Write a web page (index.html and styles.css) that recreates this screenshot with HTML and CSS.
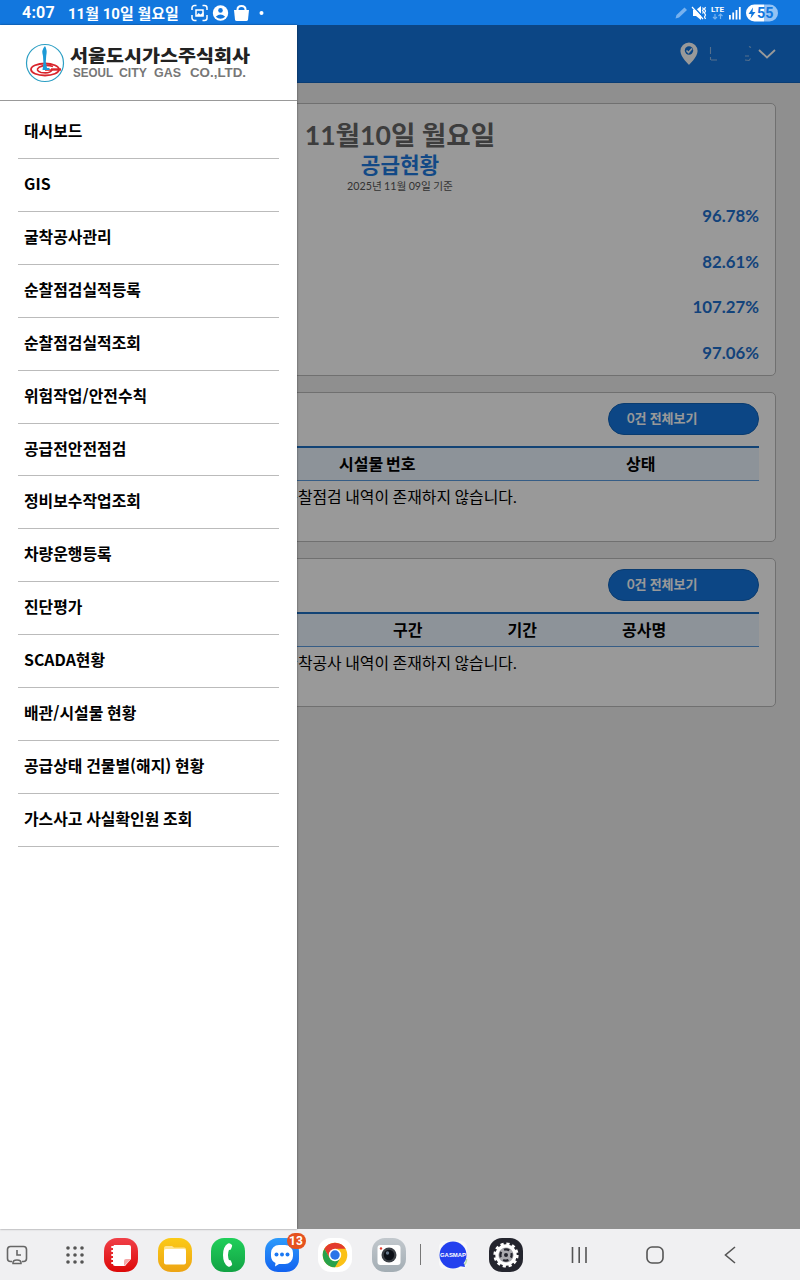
FILE: index.html
```html
<!DOCTYPE html>
<html lang="ko">
<head>
    <meta charset="UTF-8">
    <meta name="viewport" content="width=device-width, initial-scale=1.0">
    <title>서울도시가스</title>
    <link rel="stylesheet" href="styles.css">
</head>
<body>
    <div class="status-bar">
        <span class="clock">4:07</span>
        <span class="date">11월 10일 월요일</span>
        <svg class="status-left" width="76" height="18" viewBox="0 0 76 18">
            <g fill="none" stroke="#fff" stroke-width="1.500">
                <path d="M1 6V4a2.500 2.500 0 0 1 2.500-2.500H5.500M11.500 1.500h2A2.500 2.500 0 0 1 16 4v2M16 11v3a2.500 2.500 0 0 1-2.500 2.500h-2M5.500 16.500h-2A2.500 2.500 0 0 1 1 14v-3"/>
                <path d="M5 12V6h7v6z"/>
            </g>
            <path d="M5 12l2.500-3 2 1.500 3-2.500v4z" fill="#fff"/>
            <circle cx="29.500" cy="9" r="7.700" fill="#fff"/>
            <circle cx="29.500" cy="6.400" r="2.300" fill="#1277de"/>
            <path d="M24.800 12.800q4.700-4.600 9.400 0q-4.700 4-9.400 0z" fill="#1277de"/>
            <path d="M43 6h15l-1 9.500q-.2 1.500-1.700 1.500h-9.600q-1.500 0-1.700-1.500z" fill="#fff"/>
            <path d="M46.500 7V5.500q0-3.500 4-3.500t4 3.500V7" fill="none" stroke="#fff" stroke-width="2"/>
            <circle cx="70.500" cy="9" r="2" fill="#fff"/>
        </svg>
        <svg class="status-right" width="106" height="20" viewBox="0 0 106 20">
            <path d="M3.500 15.500l1-3.500 8-7.500 2.500 2.500-8 7.500z" fill="#77b2ef"/>
            <g fill="#fff">
                <path d="M21 7h3l5-4v14l-5-4h-3z"/>
                <rect x="57" y="12" width="1.800" height="4.500"/>
                <rect x="60.300" y="9.500" width="1.800" height="7"/>
                <rect x="63.600" y="7" width="1.800" height="9.500"/>
                <rect x="66.900" y="4" width="1.800" height="12.500"/>
            </g>
            <path d="M20.500 2.500l11 12" stroke="#1277de" stroke-width="1.500"/>
            <path d="M20 4l11 12M30.500 4.500l1 1.500-1 1.500 1 1.500-1 1.500M33.500 4l-1 2 1 2-1 2 1 2-1 2 1 2" fill="none" stroke="#fff" stroke-width="1.200"/>
            <text x="39" y="9" class="lte" textLength="13" lengthAdjust="spacingAndGlyphs">LTE</text>
            <path d="M43 11v5m-2-2l2 2 2-2M48.500 16v-5m-2 2l2-2 2 2" fill="none" stroke="#77b2ef" stroke-width="1.200"/>
            <path d="M82.500 1.500H92v17h-9.500a8.500 8.500 0 0 1 0-17z" fill="#fff"/>
            <path d="M92 1.500h5.500a8.500 8.500 0 0 1 0 17H92z" fill="#94c2f4"/>
            <path d="M81 4.500L76.500 11h3l-1 4.500L83.500 9h-3z" fill="#1277de"/>
            <text x="85" y="15" class="battery" textLength="16.500" lengthAdjust="spacingAndGlyphs">55</text>
        </svg>
    </div>

    <div class="app">
        <div class="header">
            <svg width="98" height="26" viewBox="0 0 98 26">
                <path d="M9 1.500a8.600 8.600 0 0 0-8.600 8.600C.4 16 9 24 9 24s8.600-8 8.600-13.900A8.600 8.600 0 0 0 9 1.500z" fill="#fff"/>
                <circle cx="9" cy="9.500" r="4.200" fill="#1476de"/>
                <path d="M6.500 9.500l2 2 3.500-4" fill="none" stroke="#fff" stroke-width="1.600"/>
                <path d="M30.500 6v7M31 19h6M30.500 16v3M69 5.500l2 1M69 15h-4M65 19l4 .5 1.500-2" fill="none" stroke="#8fbaea" stroke-width="1.100"/>
                <path d="M79 9l8 7.500L95 9" fill="none" stroke="#fff" stroke-width="1.800"/>
            </svg>
        </div>

        <div class="content">
            <div class="card supply">
                <h1>11월10일 월요일</h1>
                <h2>공급현황</h2>
                <p class="base-date">2025년 11월 09일 기준</p>
                <ul class="rates">
                    <li>96.78%</li>
                    <li>82.61%</li>
                    <li>107.27%</li>
                    <li>97.06%</li>
                </ul>
            </div>

            <div class="card list">
                <button class="more">0건 전체보기</button>
                <div class="thead patrol">
                    <span>시설물 번호</span>
                    <span>상태</span>
                </div>
                <p class="empty">순찰점검 내역이 존재하지 않습니다.</p>
            </div>

            <div class="card list">
                <button class="more">0건 전체보기</button>
                <div class="thead digging">
                    <span>구간</span>
                    <span>기간</span>
                    <span>공사명</span>
                </div>
                <p class="empty">굴착공사 내역이 존재하지 않습니다.</p>
            </div>
        </div>

        <div class="dim"></div>

        <div class="drawer">
            <div class="logo">
                <svg width="230" height="44" viewBox="0 0 230 44">
                    <circle cx="20" cy="22" r="18.500" fill="#fff" stroke="#2d9fc4" stroke-width="1.200"/>
                    <ellipse cx="20" cy="28.500" rx="14" ry="6" fill="none" stroke="#d9252c" stroke-width="1.800"/>
                    <path d="M28 25.500q-8-2.500-14 .8-4 3 2 5.200 9 1.500 11-2.500h-7" fill="none" stroke="#d9252c" stroke-width="1.600"/>
                    <path d="M26 28.500h10" stroke="#d9252c" stroke-width="2.400"/>
                    <path d="M20 5q-4 4-2 10 1 6-.5 14h7v-2h-2.500q-2-6-.8-12Q22.500 9 20 5z" fill="#1d9ad6"/>
                    <text x="45" y="21" class="logo-ko" textLength="180" lengthAdjust="spacingAndGlyphs">서울도시가스주식회사</text>
                    <text x="48" y="36" class="logo-en" textLength="40" lengthAdjust="spacingAndGlyphs">SEOUL</text>
                    <text x="94" y="36" class="logo-en" textLength="28" lengthAdjust="spacingAndGlyphs">CITY</text>
                    <text x="129" y="36" class="logo-en" textLength="27" lengthAdjust="spacingAndGlyphs">GAS</text>
                    <text x="165" y="36" class="logo-en" textLength="56" lengthAdjust="spacingAndGlyphs">CO.,LTD.</text>
                </svg>
            </div>
            <ul class="menu">
                <li>대시보드</li>
                <li>GIS</li>
                <li>굴착공사관리</li>
                <li>순찰점검실적등록</li>
                <li>순찰점검실적조회</li>
                <li>위험작업/안전수칙</li>
                <li>공급전안전점검</li>
                <li>정비보수작업조회</li>
                <li>차량운행등록</li>
                <li>진단평가</li>
                <li>SCADA현황</li>
                <li>배관/시설물 현황</li>
                <li>공급상태 건물별(해지) 현황</li>
                <li>가스사고 사실확인원 조회</li>
            </ul>
        </div>
    </div>

    <div class="dock">
        <svg width="24" height="24" viewBox="0 0 24 24" fill="none" stroke="#666" stroke-width="1.600">
            <path d="M7 18.500H5.500a3 3 0 0 1-3-3v-9a3 3 0 0 1 3-3h13a3 3 0 0 1 3 3v9a3 3 0 0 1-3 3H17"/>
            <path d="M12 7v5h4M8 20.500q-.5-3.500 4-3.500t4 3.500z"/>
        </svg>
        <i></i>
        <svg width="20" height="20" viewBox="0 0 20 20" fill="#555">
            <circle cx="3" cy="3" r="1.800"/><circle cx="10" cy="3" r="1.800"/><circle cx="17" cy="3" r="1.800"/>
            <circle cx="3" cy="10" r="1.800"/><circle cx="10" cy="10" r="1.800"/><circle cx="17" cy="10" r="1.800"/>
            <circle cx="3" cy="17" r="1.800"/><circle cx="10" cy="17" r="1.800"/><circle cx="17" cy="17" r="1.800"/>
        </svg>
        <div class="icon notes">
            <svg width="34" height="34" viewBox="0 0 34 34">
                <path d="M10 7h15a2 2 0 0 1 2 2v12l-6 7H11a2 2 0 0 1-2-2V9z" fill="#fff"/>
                <path d="M20 28v-5q0-2 2-2h5z" fill="#f6a9a9"/>
                <path d="M8 9h4M8 13h4M8 17h4M8 21h4M8 25h4" stroke="#fff" stroke-width="1.800" stroke-linecap="round"/>
            </svg>
        </div>
        <div class="icon files">
            <svg width="34" height="34" viewBox="0 0 34 34">
                <path d="M6 10a2 2 0 0 1 2-2h6l2 1.500h10a2 2 0 0 1 2 2V16H6z" fill="#ffe48f"/>
                <rect x="6" y="11" width="22" height="15.500" rx="2" fill="#fff"/>
            </svg>
        </div>
        <div class="icon phone">
            <svg width="34" height="34" viewBox="0 0 34 34">
                <path d="M17 5.500q-5 3-5 11.500t5 11.500q1 .6 2 0l1.500-1q1-.7.500-2l-1-2.500q-.5-1.200-2-.8-2-5.200 0-10.400 1.500.4 2-.8l1-2.500q.5-1.300-.5-2l-1.500-1q-1-.6-2 0z" fill="#fff"/>
            </svg>
        </div>
        <div class="icon message">
            <svg width="34" height="34" viewBox="0 0 34 34">
                <path d="M14 7h6a8 8 0 0 1 8 8v3a8 8 0 0 1-8 8h-6l-4 2.500.5-3.500A8 8 0 0 1 6 18v-3a8 8 0 0 1 8-8z" fill="#fff"/>
                <g fill="#1c78f2"><circle cx="11.500" cy="16.500" r="2"/><circle cx="17" cy="16.500" r="2"/><circle cx="22.500" cy="16.500" r="2"/></g>
            </svg>
            <span class="badge">13</span>
        </div>
        <div class="icon chrome">
            <svg width="34" height="34" viewBox="0 0 34 34">
                <circle cx="17" cy="17" r="12.300" fill="#fbc116"/>
                <path d="M6.350 10.850A12.300 12.300 0 0 1 27.650 10.850H17L11.670 20.080z" fill="#e33b2e"/>
                <path d="M6.350 10.850A12.300 12.300 0 0 0 17 29.300L22.330 20.080 17 23.150 11.670 20.080z" fill="#28a24b"/>
                <circle cx="17" cy="17" r="6.200" fill="#fff"/>
                <circle cx="17" cy="17" r="4.700" fill="#2a74e8"/>
            </svg>
        </div>
        <div class="icon camera">
            <svg width="34" height="34" viewBox="0 0 34 34">
                <rect x="5.500" y="7" width="23" height="20" rx="3" fill="#fff"/>
                <circle cx="9" cy="10.500" r="1.200" fill="#e33b2e"/>
                <circle cx="17" cy="17" r="7.500" fill="#3b3f45"/>
                <circle cx="17" cy="17" r="5.200" fill="#0c1017"/>
                <circle cx="15.500" cy="15" r="1.700" fill="#66778b"/>
            </svg>
        </div>
        <span class="divider"></span>
        <svg width="34" height="34" viewBox="0 0 34 34">
            <rect x="3" y="3" width="28" height="28" rx="6" fill="#f8f8f8"/>
            <path d="M27.500 27q3-1 3-6" stroke="#b8dda8" stroke-width="1.500" fill="none"/>
            <circle cx="17" cy="17" r="13.500" fill="#2340ee"/>
            <path d="M23 28l5-3 1 4z" fill="#2340ee"/>
            <text x="4" y="19" class="gasmap" textLength="26" lengthAdjust="spacingAndGlyphs">GASMAP</text>
        </svg>
        <div class="icon gear">
            <svg width="34" height="34" viewBox="0 0 34 34">
                <circle cx="17" cy="17" r="11.300" fill="none" stroke="#fff" stroke-width="2.600" stroke-dasharray="3.200 2.717"/>
                <circle cx="17" cy="17" r="10.700" fill="#fff"/>
                <circle cx="17" cy="17" r="7.600" fill="#a9a9ae"/>
                <circle cx="17" cy="17" r="5.600" fill="none" stroke="#24252e" stroke-width="2.200" stroke-dasharray="5.500 3.296" stroke-dashoffset="2.750"/>
                <circle cx="17" cy="17" r="2" fill="#24252e"/>
            </svg>
        </div>
        <svg width="20" height="20" viewBox="0 0 20 20" stroke="#555" stroke-width="1.600">
            <path d="M3.500 2v16M10.200 2v16M17 2v16"/>
        </svg>
        <svg width="20" height="20" viewBox="0 0 20 20" fill="none" stroke="#555" stroke-width="1.600">
            <rect x="2" y="2" width="16" height="16" rx="5"/>
        </svg>
        <svg width="20" height="20" viewBox="0 0 20 20" fill="none" stroke="#555" stroke-width="1.600">
            <path d="M15 2L5.500 10l9.500 8"/>
        </svg>
    </div>
</body>
</html>
```
FILE: styles.css
```css
* {
    margin: 0;
    padding: 0;
    box-sizing: border-box;
}
body {
    display: flex;
    flex-direction: column;
    width: 800px;
    height: 1280px;
    overflow: hidden;
    font-family: Lato, "Noto Sans CJK KR", sans-serif;
    color: #000;
}
ul {
    list-style: none;
}

/* status bar */
.status-bar {
    display: flex;
    align-items: center;
    height: 25px;
    flex: none;
    padding: 0 22px;
    background: #1277de;
    color: #fff;
    font-family: Roboto, "Noto Sans CJK KR", sans-serif;
    font-size: 15px;
    font-weight: bold;
    white-space: nowrap;
}
.clock {
    width: 46px;
    font-size: 16px;
    letter-spacing: 0.2px;
}
.date {
    width: 123px;
}
.status-right {
    margin-left: auto;
}
.lte {
    font: bold 8px Roboto, sans-serif;
    fill: #fff;
}
.battery {
    font: bold 14px Roboto, sans-serif;
    fill: #1277de;
}

/* main screen */
.app {
    position: relative;
    flex: 1;
    background: #eee;
}
.header {
    display: flex;
    align-items: center;
    justify-content: flex-end;
    height: 58px;
    padding-right: 22px;
    background: #1476de;
    border-bottom: 1px solid #0f66c4;
}
.content {
    display: flex;
    flex-direction: column;
    gap: 16px;
    padding: 20px 24px;
}
.card {
    background: #fff;
    border: 1px solid #bbb;
    border-radius: 5px;
    padding: 0 16px;
}
.supply {
    height: 273.400px;
    padding-top: 14px;
    text-align: center;
}
.supply h1 {
    font-size: 26.600px;
    line-height: 35px;
    color: #666;
}
.supply h2 {
    font-size: 21.300px;
    line-height: 25px;
    color: #1e7be0;
}
.base-date {
    font-size: 10.700px;
    line-height: 16px;
    word-spacing: -0.400px;
    color: #555;
}
.rates {
    margin-top: 7px;
    text-align: right;
    font-weight: bold;
    font-size: 16.800px;
    color: #1e70ce;
}
.rates li {
    height: 45.500px;
    line-height: 30px;
}
.list {
    height: 149.200px;
    padding-top: 10px;
}
.more {
    display: block;
    width: 151px;
    height: 32px;
    margin-left: auto;
    padding: 0 0 3px 18px;
    text-align: left;
    background: #1476de;
    border: 1px solid #1264bb;
    border-radius: 16px;
    color: #fff;
    font: bold 13px Lato, "Noto Sans CJK KR", sans-serif;
}
.thead {
    display: grid;
    height: 35px;
    margin-top: 11px;
    line-height: 31px;
    background: #ecf5ff;
    border-top: 2px solid #1e70c4;
    border-bottom: 1px solid #5b9be0;
    font-size: 16px;
    font-weight: bold;
    word-spacing: -1px;
}
.patrol {
    grid-template-columns: 287px 1fr;
    padding-left: 298px;
}
.digging {
    grid-template-columns: 114.500px 114.500px 1fr;
    padding-left: 352px;
}
.empty {
    text-align: center;
    font-size: 15.900px;
    line-height: 31px;
    word-spacing: -0.600px;
}
.dim {
    position: absolute;
    inset: 0;
    background: rgba(0, 0, 0, 0.4);
}

/* side menu, lies over the dimmed screen */
.drawer {
    position: absolute;
    top: 0;
    left: 0;
    bottom: 0;
    width: 297px;
    background: #fff;
    box-shadow: 0 0 2px rgba(0, 0, 0, 0.5);
}
.logo {
    height: 76px;
    padding: 16px 0 0 25px;
    border-bottom: 1px solid #999;
}
.logo-ko {
    font: 900 17px "Noto Sans CJK KR", sans-serif;
    fill: #222;
}
.logo-en {
    font: bold 12px "Liberation Sans", sans-serif;
    fill: #777;
}
.menu {
    padding: 5px 18px 0;
}
.menu li {
    height: 52.930px;
    padding-left: 6px;
    line-height: 49px;
    border-bottom: 1px solid #bbb;
    font-family: "Noto Sans CJK KR", sans-serif;
    font-size: 15.900px;
    font-weight: bold;
    word-spacing: -0.700px;
}

/* bottom dock */
.dock {
    display: grid;
    grid-template-columns: 34px 21.750px 38.500px repeat(6, 53.500px) 9.750px 56px 50px 96px 56px 94px;
    align-items: center;
    justify-items: center;
    flex: none;
    height: 51px;
    background: #f0f0f2;
}
.icon {
    position: relative;
    width: 34px;
    height: 34px;
    border-radius: 13px;
}
.icon svg {
    display: block;
}
.notes {
    background: linear-gradient(#f04048, #dd0808);
}
.files {
    background: linear-gradient(#fbca16, #eda414);
}
.phone {
    background: linear-gradient(#20cf5a, #12a244);
}
.message {
    background: linear-gradient(#2d9bfb, #1262f0);
}
.chrome {
    background: #fff;
}
.camera {
    background: linear-gradient(#c2c8cd, #a3adb4);
}
.gear {
    background: #24252e;
}
.badge {
    position: absolute;
    top: -5px;
    right: -7px;
    width: 19px;
    height: 16px;
    border-radius: 8px;
    background: #e5521e;
    color: #fff;
    font: bold 12px/16px Roboto, sans-serif;
    text-align: center;
}
.divider {
    width: 1px;
    height: 21px;
    background: #777;
}
.gasmap {
    font: bold 6px "Liberation Sans", sans-serif;
    fill: #fff;
}
```
